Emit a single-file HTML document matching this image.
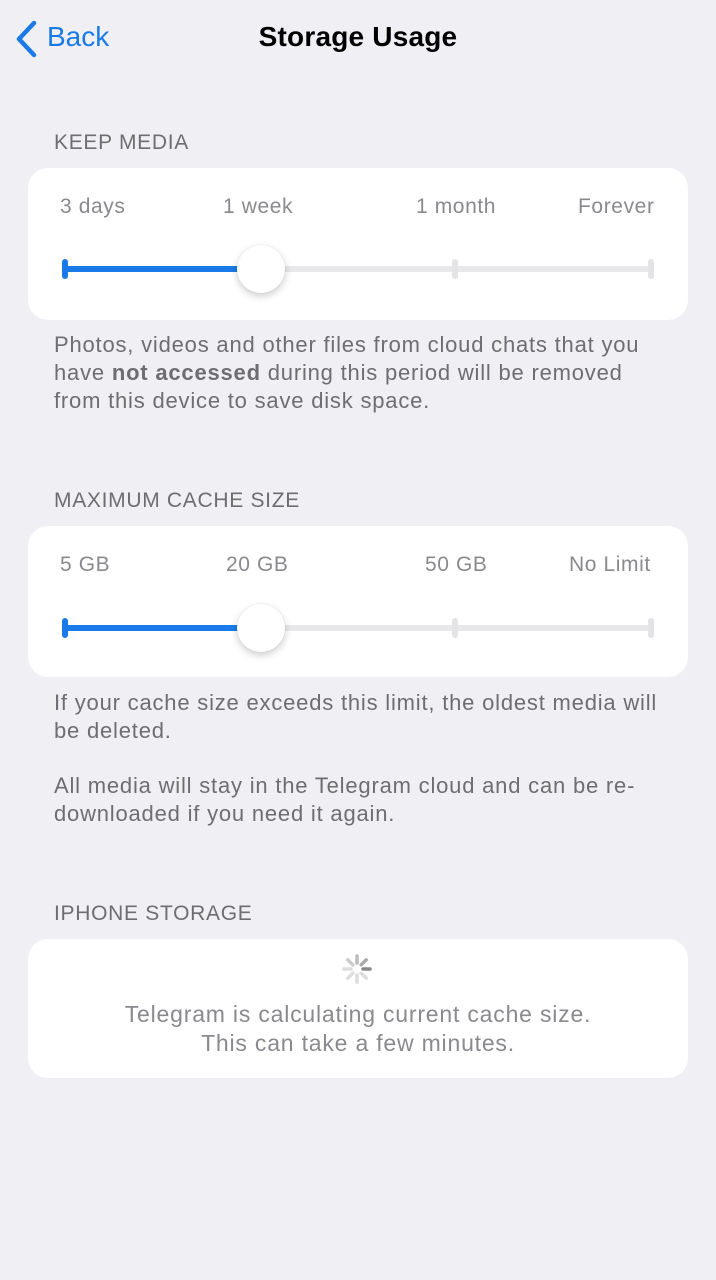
<!DOCTYPE html>
<html><head><meta charset="utf-8"><style>
body{margin:0;width:716px;height:1280px;background:#efeff4;font-family:"Liberation Sans",sans-serif;position:relative;overflow:hidden}
.a{position:absolute;white-space:nowrap}
.card{position:absolute;left:28px;width:660px;background:#fff;border-radius:20px}
.hdr{font-size:21px;color:#6d6d72;left:54px;letter-spacing:0.7px}
.lab{font-size:21px;color:#8a8a8e;letter-spacing:0.6px}
.foot{font-size:22px;color:#6d6d72;left:54px;line-height:28px;white-space:normal;width:640px;letter-spacing:0.8px}
.track{position:absolute;left:37px;width:586px;height:6px;background:#e8e8ea;border-radius:3px}
.fill{position:absolute;left:37px;width:196px;height:6px;background:#1a7be8;border-radius:3px}
.tick{position:absolute;width:6px;height:20px;border-radius:3px;background:#e4e4e6}
.thumb{position:absolute;width:48px;height:48px;border-radius:50%;background:#fff;box-shadow:0 3px 8px rgba(0,0,0,.2),0 0 1px rgba(0,0,0,.15)}
</style></head><body>
<svg class="a" style="left:12px;top:20px" width="26" height="38"><path d="M22 3 L7 19 L22 35" stroke="#1a7be8" stroke-width="4.5" fill="none" stroke-linecap="round" stroke-linejoin="round"/></svg>
<div class="a" style="left:47px;top:21px;font-size:28px;color:#1a7be8">Back</div>
<div class="a" style="left:0;width:716px;text-align:center;top:21px;font-size:28px;font-weight:bold;color:#000;letter-spacing:0.2px">Storage Usage</div>

<div class="a hdr" style="top:131px">KEEP MEDIA</div>
<div class="card" style="top:168px;height:152px">
<div class="a lab" style="left:32px;top:27px">3 days</div>
<div class="a lab" style="left:195px;top:27px">1 week</div>
<div class="a lab" style="left:388px;top:27px">1 month</div>
<div class="a lab" style="left:550px;top:27px">Forever</div>
<div class="track" style="top:98px"></div>
<div class="fill" style="top:98px"></div>
<div class="tick" style="left:34px;top:91px;background:#1a7be8"></div>
<div class="tick" style="left:424px;top:91px"></div>
<div class="tick" style="left:620px;top:91px"></div>
<div class="thumb" style="left:209px;top:77px"></div>
</div>
<div class="a foot" style="top:331px">Photos, videos and other files from cloud chats that you<br>have <b>not accessed</b> during this period will be removed<br>from this device to save disk space.</div>

<div class="a hdr" style="top:489px">MAXIMUM CACHE SIZE</div>
<div class="card" style="top:526px;height:151px">
<div class="a lab" style="left:32px;top:27px">5 GB</div>
<div class="a lab" style="left:198px;top:27px">20 GB</div>
<div class="a lab" style="left:397px;top:27px">50 GB</div>
<div class="a lab" style="left:541px;top:27px">No Limit</div>
<div class="track" style="top:99px"></div>
<div class="fill" style="top:99px"></div>
<div class="tick" style="left:34px;top:92px;background:#1a7be8"></div>
<div class="tick" style="left:424px;top:92px"></div>
<div class="tick" style="left:620px;top:92px"></div>
<div class="thumb" style="left:209px;top:78px"></div>
</div>
<div class="a foot" style="top:689px">If your cache size exceeds this limit, the oldest media will<br>be deleted.</div>
<div class="a foot" style="top:772px">All media will stay in the Telegram cloud and can be re-<br>downloaded if you need it again.</div>

<div class="a hdr" style="top:902px">IPHONE STORAGE</div>
<div class="card" style="top:939px;height:139px">
<svg class="a" style="left:313px;top:14px" width="32" height="32" viewBox="-16 -16 32 32">
<g stroke-linecap="round" stroke-width="3.5">
<line x1="0" y1="-6" x2="0" y2="-13" stroke="#bbb" />
<line x1="4.2" y1="-4.2" x2="9.2" y2="-9.2" stroke="#aaa"/>
<line x1="6" y1="0" x2="13" y2="0" stroke="#888"/>
<line x1="4.2" y1="4.2" x2="9.2" y2="9.2" stroke="#ddd"/>
<line x1="0" y1="6" x2="0" y2="13" stroke="#ddd"/>
<line x1="-4.2" y1="4.2" x2="-9.2" y2="9.2" stroke="#ddd"/>
<line x1="-6" y1="0" x2="-13" y2="0" stroke="#ddd"/>
<line x1="-4.2" y1="-4.2" x2="-9.2" y2="-9.2" stroke="#ccc"/>
</g></svg>
<div class="a" style="left:0;width:660px;text-align:center;top:61px;font-size:23px;line-height:29px;color:#8a8a8e;letter-spacing:0.8px">Telegram is calculating current cache size.<br>This can take a few minutes.</div>
</div>
</body></html>
